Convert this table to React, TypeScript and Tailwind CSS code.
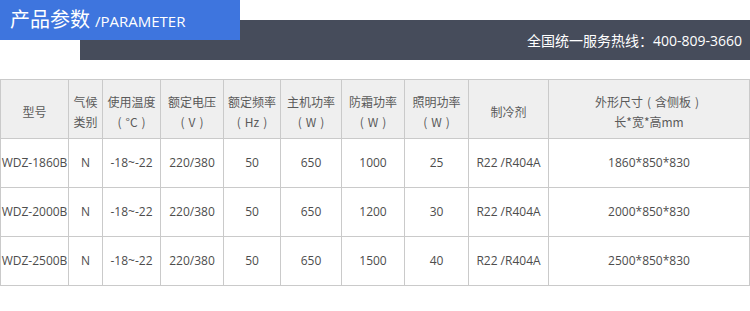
import React from "react";

const font = { fontFamily: "'Open Sans','Noto Sans CJK SC',sans-serif" };
const cjk = { fontFamily: "'Noto Sans CJK SC','Open Sans',sans-serif" };

const headers: string[][] = [
  ["型号"],
  ["气候", "类别"],
  ["使用温度", "（°C）"],
  ["额定电压", "（V）"],
  ["额定频率", "（Hz）"],
  ["主机功率", "（W）"],
  ["防霜功率", "（W）"],
  ["照明功率", "（W）"],
  ["制冷剂"],
  ["外形尺寸（含侧板）", "长*宽*高mm"],
];

const rows: string[][] = [
  ["WDZ-1860B", "N", "-18~-22", "220/380", "50", "650", "1000", "25", "R22 /R404A", "1860*850*830"],
  ["WDZ-2000B", "N", "-18~-22", "220/380", "50", "650", "1200", "30", "R22 /R404A", "2000*850*830"],
  ["WDZ-2500B", "N", "-18~-22", "220/380", "50", "650", "1500", "40", "R22 /R404A", "2500*850*830"],
];

function Line({ text }: { text: string }) {
  const parts = text.split(/([（）])/).filter((p) => p !== "");
  return (
    <span className="flex items-center">
      {parts.map((p, i) =>
        p === "（" ? (
          <span key={i} className="inline-block w-[12px] text-center">(</span>
        ) : p === "）" ? (
          <span key={i} className="inline-block w-[12px] text-center">)</span>
        ) : (
          <span key={i}>{p}</span>
        )
      )}
    </span>
  );
}

export default function App() {
  return (
    <div className="w-[750px] h-[311px] bg-white overflow-hidden" style={font}>
      {/* Header */}
      <div className="relative h-[60px]">
        <div className="ml-[80px] pt-[20px] h-[60px]">
          <div className="relative h-[40px] bg-[#464c5b] flex items-center justify-end pr-[8px]">
            <svg className="absolute left-0 top-0" width="160" height="20" viewBox="0 0 160 20">
              <polygon points="0,0 160,0 0,20" fill="#3a67c6" />
            </svg>
            <span className="text-white text-[14px] leading-none">
              <span style={cjk}>全国统一服务热线：</span>400-809-3660
            </span>
          </div>
        </div>
        <div className="absolute left-0 top-0 w-[240px] h-[40px] bg-[#3e75de] flex items-baseline pl-[10px] pt-[6px]">
          <span className="text-white text-[20px] leading-[26px]" style={cjk}>产品参数</span>
          <span className="text-white text-[15px] leading-[26px] ml-[5px]">/PARAMETER</span>
        </div>
      </div>

      {/* Table */}
      <div className="mt-[19px] grid grid-cols-[67px_33px_57px_62px_56px_60px_62px_63px_79px_200px] grid-rows-[58px_48px_48px_48px] gap-px bg-[#cacaca] p-px w-[750px]">
        {headers.map((h, i) => (
          <div
            key={"h" + i}
            className="bg-[#efefef] flex flex-col items-center justify-center pt-[6px] text-[12px] leading-[20px] text-[#5a5a5a] whitespace-nowrap"
            style={cjk}
          >
            {h.map((l, j) => (
              <Line key={j} text={l} />
            ))}
          </div>
        ))}
        {rows.map((r, ri) =>
          r.map((c, ci) => (
            <div
              key={ri + "-" + ci}
              className="bg-white flex items-center justify-center text-[12px] text-[#4d4d4d] whitespace-nowrap"
            >
              {c}
            </div>
          ))
        )}
      </div>
    </div>
  );
}
